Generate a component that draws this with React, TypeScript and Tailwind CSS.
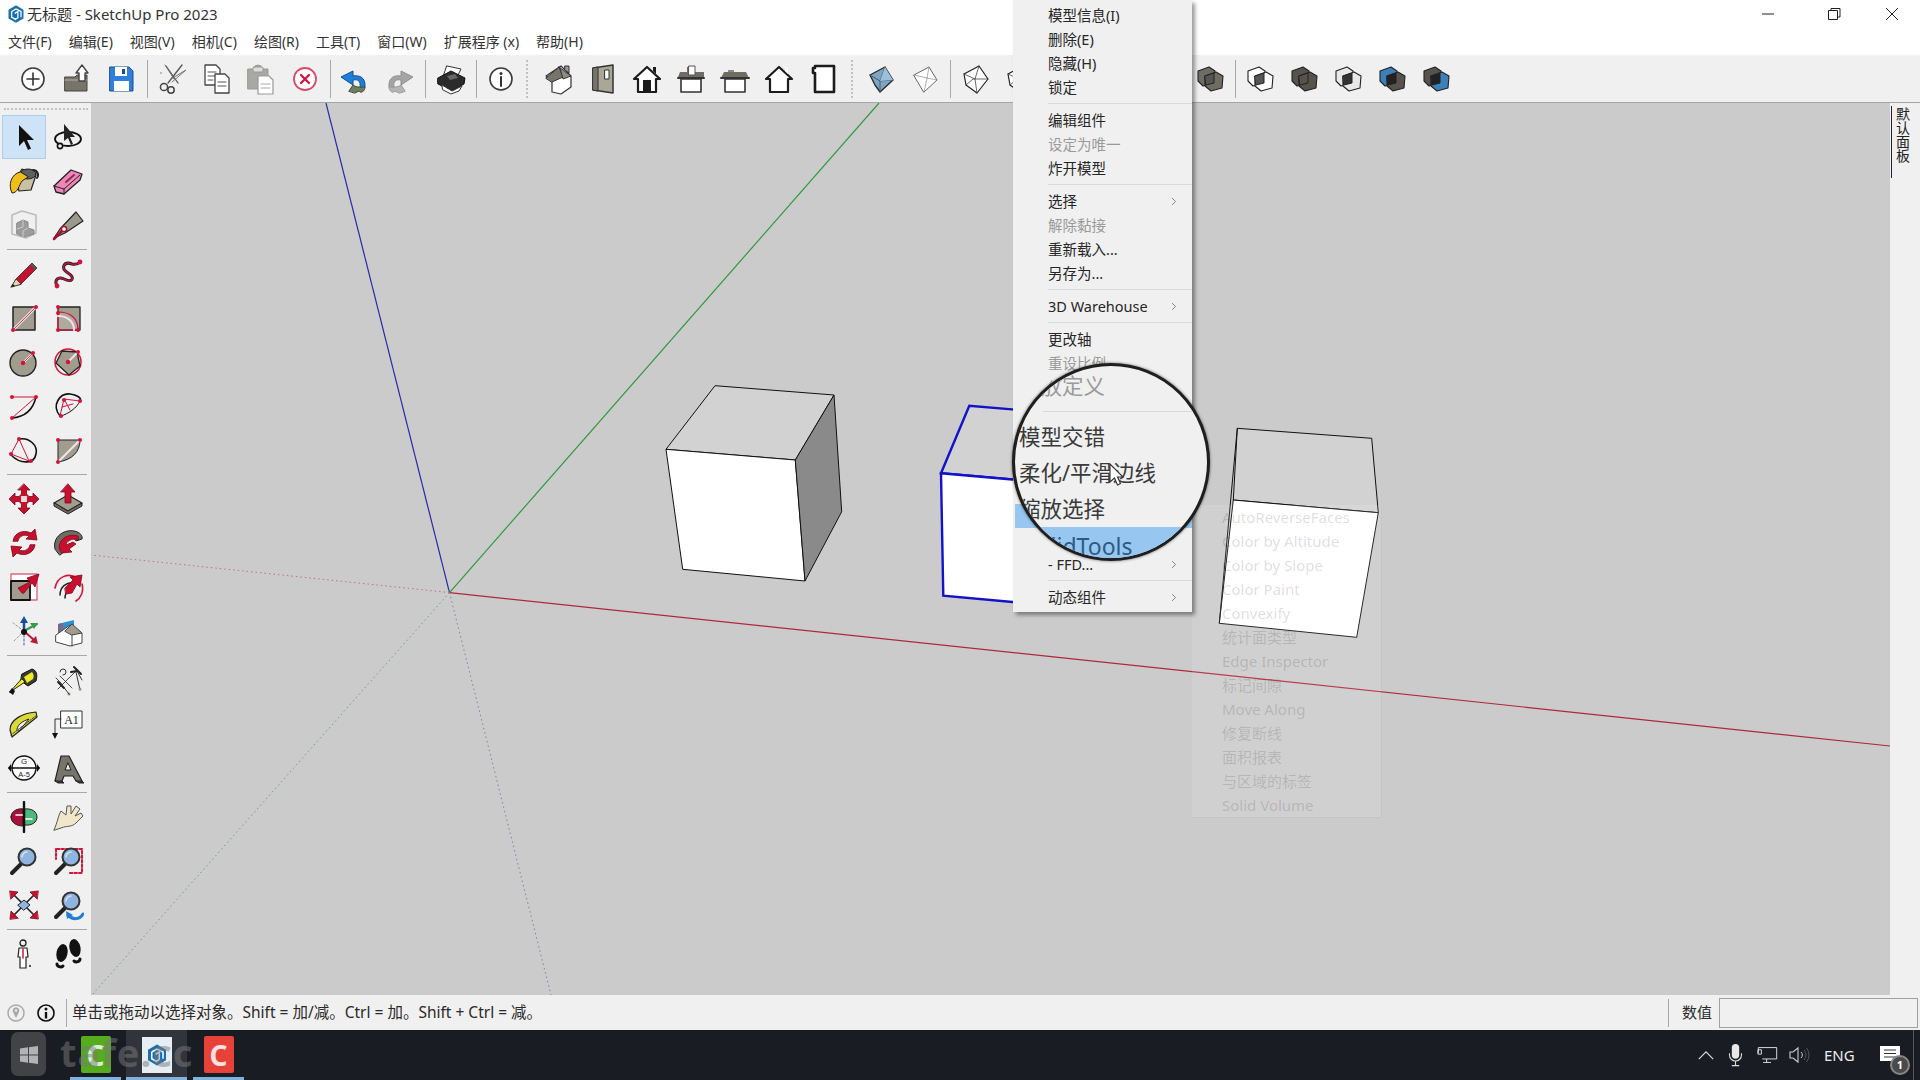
import React from "react";

const G = "#a09d8e";
const R = "#d4123a";
const K = "#1c1c1c";

const I = ({ children }: { children: React.ReactNode }) => (
  <svg viewBox="0 0 32 32" className="w-8 h-8" fill="none" strokeLinejoin="round" strokeLinecap="round">
    {children}
  </svg>
);

const Dot = ({ x, y, r = 2 }: { x: number; y: number; r?: number }) => <circle cx={x} cy={y} r={r} fill={R} />;

const House = ({ roof = "#6f6d63", body = "#fff", door = false }: { roof?: string; body?: string; door?: boolean }) => (
  <>
    <path d="M3 16 L16 4 L29 16 L25 16 L25 29 L7 29 L7 16 Z" fill={body} stroke={K} strokeWidth="2.2" />
    {door && <rect x="12" y="17" width="8" height="12" fill={K} />}
    <path d="M22 4 h3 v7 l-3 -3 z" fill={roof === "none" ? "#fff" : K} />
  </>
);

const wire = (
  <>
    <path d="M5 11 L20 3 L29 16 L18 30 L7 22 Z" fill="#fff" stroke="#222" strokeWidth="1.2" />
    <path d="M5 11 L16 16 L20 3 M16 16 L18 30 M7 22 L14 16 L29 16" stroke="#444" strokeWidth="0.8" />
  </>
);

const Solid = ({ a, b, c }: { a: string; b: string; c: string }) => (
  <>
    <path d="M4 8 L15 4 L21 8 L20 20 L9 23 L4 18 Z" fill={a} stroke="#222" strokeWidth="1.1" />
    <path d="M11 13 L22 9 L29 13 L28 25 L17 28 L11 23 Z" fill={b} stroke="#222" strokeWidth="1.1" />
    <path d="M11 13 L20 10 L20 20 L12 22 Z" fill={c} stroke="#222" strokeWidth="1" />
  </>
);

const top1 = [
  <I key="n"><circle cx="16" cy="16" r="11" stroke="#3b3b3b" strokeWidth="1.6" fill="#fff" /><path d="M16 10v12M10 16h12" stroke="#333" strokeWidth="1.6" /></I>,
  <I key="o"><path d="M4 14 h10 l2 -2 h10 v16 H4 Z" fill="#77756a" stroke="#444" /><path d="M4 17 h22" stroke="#b5b3a8" /><path d="M21 2 l6 8 h-3 v8 h-6 v-8 h-3 Z" fill="#fff" stroke="#444" strokeWidth="1.4" /></I>,
  <I key="s"><path d="M5 4 h19 l4 4 v20 H5 Z" fill="#2f7fdc" stroke="#1a4e8f" /><rect x="10" y="4" width="12" height="9" fill="#fff" /><rect x="17" y="6" width="3" height="5" fill="#1a4e8f" /><rect x="9" y="18" width="15" height="10" fill="#fff" /></I>,
];
const top2 = [
  <I key="c"><path d="M11 20 L25 2 M21 20 L9 3 M4 10 h0" stroke="#555" strokeWidth="1.3" /><path d="M14 16 L29 7 L15 19 M17 16 L8 2" stroke="#777" strokeWidth="1" /><circle cx="7" cy="24" r="3.6" stroke="#444" strokeWidth="1.5" /><circle cx="14" cy="27" r="3.2" stroke="#444" strokeWidth="1.5" /></I>,
  <I key="cp"><path d="M4 2 h11 l4 4 v16 H4 Z" fill="#fff" stroke="#444" strokeWidth="1.3" /><path d="M7 9h8M7 13h8M7 17h5" stroke="#555" /><path d="M14 11 h10 l4 4 v15 H14 Z" fill="#fff" stroke="#444" strokeWidth="1.3" /><path d="M17 19h8M17 23h8" stroke="#555" /></I>,
  <I key="p"><path d="M3 6 h6 a4 4 0 0 1 8 0 h6 v20 H3 Z" fill="#a9a9a3" stroke="#999" /><rect x="8" y="4" width="10" height="5" rx="1" fill="#dcdcd8" stroke="#999" /><path d="M13 13 h11 l4 4 v14 H13 Z" fill="#fff" stroke="#999" strokeWidth="1.2" /><path d="M16 21h9M16 25h9" stroke="#aaa" /></I>,
  <I key="d"><circle cx="16" cy="16" r="11" stroke="#d84a6c" strokeWidth="1.8" fill="#fff" /><path d="M12 12l8 8M20 12l-8 8" stroke={R} strokeWidth="2.2" /></I>,
];
const top3 = [
  <I key="u"><path d="M26 24 C27 14 20 12 14 13 V8 L2 14 L14 22 V17 C19 16 22 18 21 24 Z" fill="#1f7fd6" stroke="#0f4f8f" /><path d="M10 28 L14 22 C18 25 23 24 26 24 C26 28 22 31 20 28 L16 30 Z" fill="#6f7e5e" stroke="#3f4a35" /></I>,
  <I key="r"><path d="M6 24 C5 14 12 12 18 13 V8 L30 14 L18 22 V17 C13 16 10 18 11 24 Z" fill="#a5a5a5" stroke="#909090" /><path d="M22 28 L18 22 C14 25 9 24 6 24 C6 28 10 31 12 28 L16 30 Z" fill="#b5b5b5" stroke="#999" /></I>,
];
const print = <I key="pr"><path d="M12 3 L26 6 L22 14 L9 12 Z" fill="#fff" stroke="#333" /><path d="M3 15 L16 8 L30 15 L29 21 L17 28 L3 21 Z" fill="#2b2b2b" stroke="#111" /><path d="M12 13 L20 11 L23 15 L15 17 Z" fill="#666" /><path d="M7 22 L17 28 L27 23 L24 28 L16 31 L8 27 Z" fill="#fff" stroke="#333" /></I>;
const info = <I key="i"><circle cx="16" cy="16" r="11" stroke="#3b3b3b" strokeWidth="1.6" fill="#fff" /><circle cx="16" cy="10.5" r="1.5" fill="#333" /><path d="M16 14v9" stroke="#333" strokeWidth="2" /></I>;
const houses = [
  <I key="h1"><path d="M9 17 L9 29 L18 31 L28 24 L28 13 L18 3 L3 13 Z" fill="#fff" stroke="#333" strokeWidth="1.2" /><path d="M3 15 L16 4 L20 14 L9 19 Z" fill="#77756a" stroke="#333" /><path d="M16 4 L28 13 L20 16 L17 5Z" fill="#8f8d82" stroke="#333" /><path d="M22 3h4v7l-4-3z" fill="#999" stroke="#333" /></I>,
  <I key="h2"><path d="M6 5 L26 2 L26 30 L6 27 Z" fill="#a9a797" stroke="#333" strokeWidth="1.5" /><path d="M6 5 L11 4 L11 28 L6 27 Z" fill="#77756a" stroke="#333" /><rect x="18" y="7" width="4" height="9" fill="#fff" stroke="#333" /></I>,
  <I key="h3"><House door /></I>,
  <I key="h4"><path d="M3 14 H29 V9 H20 V4 H12 V9 H5 Z" fill="#6f6d63" /><rect x="14" y="3" width="6" height="9" fill="#fff" stroke="#555" /><path d="M3 15 h26" stroke="#333" strokeWidth="2" /><rect x="6" y="16" width="20" height="13" fill="#fff" stroke="#333" strokeWidth="1.6" /></I>,
  <I key="h5"><path d="M7 9 L27 9 L30 15 H2 L5 9 Z" fill="#6f6d63" /><path d="M9 7 h6 v2 h-6Z" fill="#888" /><path d="M2 15 h28" stroke="#333" strokeWidth="2" /><rect x="6" y="16" width="20" height="13" fill="#fff" stroke="#333" strokeWidth="1.6" /></I>,
  <I key="h6"><House roof="none" /></I>,
  <I key="h7"><path d="M8 3 H27 V29 H8 V10 H6 V5 H8 Z" fill="#fff" stroke={K} strokeWidth="2.6" /></I>,
];
const views = [
  <I key="v1"><path d="M5 12 L20 4 L28 17 L15 29 L10 22 Z" fill="#7ea6c2" stroke="#2b2b2b" strokeWidth="1.4" /><path d="M5 12 L15 18 L20 4 M15 18 L15 29 M15 18 L28 17" stroke="#3f5f78" /><path d="M15 18 L20 4 L28 17Z" fill="#9cc0da" /></I>,
  <I key="v2"><path d="M5 12 L20 4 L28 17 L15 29 Z" fill="#fff" stroke="#666" strokeWidth="1" /><path d="M5 12 L18 15 L20 4 M18 15 L15 29 M18 15 L28 17" stroke="#999" strokeWidth=".8" /></I>,
];
const view3 = [<I key="w1">{wire}</I>, <I key="w2">{wire}</I>];
const solid0 = <I key="s0"><Solid a="#6f6d63" b="#6f6d63" c="#555" /></I>;
const solids = [
  <I key="s1"><Solid a="#fff" b="#fff" c="#555" /></I>,
  <I key="s2"><Solid a="#55534b" b="#55534b" c="#55534b" /></I>,
  <I key="s3"><Solid a="#e8e8e8" b="#e8e8e8" c="#333" /></I>,
  <I key="s4"><Solid a="#3d7fb8" b="#55534b" c="#222" /></I>,
  <I key="s5"><Solid a="#55534b" b="#3d7fb8" c="#222" /></I>,
];

const Arrow = ({ d, f = "#c8102e" }: { d: string; f?: string }) => <path d={d} fill={f} stroke="#7a0a1e" strokeWidth=".8" />;
const Mag = ({ x = 0 }: { x?: number }) => (
  <>
    <path d={`M${4 + x} 28 L${13 + x} 19`} stroke="#222" strokeWidth="4" />
    <circle cx={19 + x} cy="12" r="8.5" fill="#8fb4de" stroke="#333" strokeWidth="2" />
    <path d={`M${14 + x} 12 a5 5 0 0 1 5 -5`} stroke="#d5e5f6" strokeWidth="1.5" />
  </>
);

const left1 = [
  <I key="a"><path d="M11 4 V25 L16 20 L20 29 L23 27.5 L19 19 L26 19 Z" fill="#111" /></I>,
  <I key="b"><ellipse cx="16" cy="18" rx="13" ry="7" stroke="#111" strokeWidth="1.8" /><path d="M12 3 V20 L16 17 L19 24 L21 23 L18 16 L23 16 Z" fill="#222" /><circle cx="8" cy="25" r="2.6" stroke="#111" strokeWidth="1.6" fill="#f0f0f0" /></I>,
  <I key="c"><path d="M14 4 L28 10 L23 25 L11 26 L8 14 Z" fill="#c9c1a3" stroke="#222" strokeWidth="1.2" /><ellipse cx="20" cy="9" rx="8" ry="5" fill="#5a6260" stroke="#222" /><path d="M25 5 a5 5 0 0 1 4 8" stroke="#222" strokeWidth="2" /><path d="M12 7 C3 9 0 20 4 28 C10 28 11 20 14 16 L20 12 Z" fill="#f0be1a" stroke="#222" /></I>,
  <I key="d"><path d="M2 21 L19 5 L30 9 L28 15 L12 29 L4 27 Z" fill="#ef86b8" stroke="#222" strokeWidth="1.3" /><path d="M2 21 L12 24 L12 29 M12 24 L28 10" stroke="#222" strokeWidth="1" /><path d="M14 17 L22 10" stroke="#8a2b5e" strokeWidth="2" /></I>,
  <I key="e"><path d="M4 6 L14 2 L28 6 L28 24 L18 29 L4 25 Z" stroke="#bdbdbd" strokeWidth="1.6" /><path d="M9 14 L15 11 L20 13 L20 19 L26 21 L26 25 L16 28 L9 25 Z" fill="#9c9c9c" stroke="#888" /><path d="M15 11 V18 L9 20 M20 19 L15 22 V28" stroke="#ccc" /></I>,
  <I key="f"><path d="M2 29 L8 20 L24 3 L31 12 L13 24 Z" fill="#9c9a8b" stroke="#222" strokeWidth="1.2" /><path d="M2 30 L11 21" stroke="#a8102e" strokeWidth="2.5" /><circle cx="12" cy="20" r="2.6" fill="#fff" stroke="#a8102e" strokeWidth="1.5" /></I>,
];
const left2 = [
  <I key="g"><path d="M4 28 L8 21 L24 5 L29 10 L13 26 Z" fill="#c4122f" stroke="#222" strokeWidth=".8" /><path d="M22 7 L27 12 L29 10 L24 5Z" fill="#555" /><path d="M3 29 L8 21 L13 26 Z" fill="#e5d3a5" stroke="#222" strokeWidth=".7" /><path d="M3 29 L5 26 L7 28Z" fill="#111" /></I>,
  <I key="h"><path d="M5 28 C2 22 6 18 12 21 C20 25 24 20 16 15 C8 10 12 3 20 6 C24 7 26 6 28 4" stroke={K} strokeWidth="3" /><path d="M5 28 C2 22 6 18 12 21 C20 25 24 20 16 15 C8 10 12 3 20 6 C24 7 26 6 28 4" stroke="#b3163c" strokeWidth="1.6" /><Dot x={5} y={28} r={2.4} /><Dot x={28} y={4} r={2.4} /></I>,
  <I key="i"><rect x="5" y="5" width="22" height="23" fill={G} stroke="#222" strokeWidth="1.5" /><path d="M5 28 L28 5" stroke="#f7dfe4" strokeWidth="2.5" /><path d="M5 28 L28 5" stroke={R} strokeWidth=".8" /><Dot x={5} y={28} /><Dot x={28} y={5} /></I>,
  <I key="j"><rect x="6" y="5" width="22" height="23" fill={G} stroke="#222" strokeWidth="1.3" /><path d="M6 10 C18 10 26 16 26 28 H6 Z" fill="#fff" fillOpacity=".15" stroke={R} strokeWidth="1.2" /><path d="M6 14 C15 14 22 19 22 28" stroke="#f7dfe4" strokeWidth="2" /><Dot x={6} y={5} /><Dot x={6} y={11} /><Dot x={6} y={28} /><Dot x={26} y={28} /></I>,
  <I key="k"><circle cx="15" cy="17" r="13" fill={G} stroke="#222" strokeWidth="1.4" /><path d="M15 17 L25 7" stroke="#f7dfe4" strokeWidth="2.2" /><path d="M15 17 L25 7" stroke={R} strokeWidth=".8" /><Dot x={15} y={17} r={2.2} /><Dot x={25} y={7} /></I>,
  <I key="l"><circle cx="16" cy="16" r="13" stroke={R} strokeWidth="1.5" /><path d="M4 17 L10 5 L25 6 L28 20 L17 29 Z" fill={G} stroke="#222" strokeWidth="1.3" /><path d="M16 16 L26 6" stroke="#f7dfe4" strokeWidth="2.2" /><Dot x={16} y={16} r={2.2} /><Dot x={26} y={6} /></I>,
  <I key="m"><path d="M4 28 C16 27 25 20 28 7" stroke="#111" strokeWidth="1.5" /><path d="M4 28 L28 7 M4 7 H28" stroke={R} strokeWidth="1" /><Dot x={4} y={28} /><Dot x={28} y={7} /><Dot x={4} y={7} /></I>,
  <I key="n"><path d="M8 26 C-1 15 8 3 18 4 C25 5 30 8 28 11" stroke="#111" strokeWidth="1.6" /><path d="M9 26 C16 24 25 18 28 11" stroke="#111" strokeWidth="1" /><path d="M8 26 L12 9 M18 20 L12 9 L28 11 M10 17 L21 14" stroke={R} strokeWidth="1" /><Dot x={12} y={10} /><Dot x={28} y={11} /><Dot x={9} y={26} /></I>,
  <I key="o"><path d="M11 5 C22 3 30 12 28 20 C27 26 23 28 18 28" stroke="#111" strokeWidth="1.6" /><path d="M3 21 C8 26 13 28 18 28" stroke="#111" strokeWidth="1.4" /><path d="M11 5 L21 27 L3 20 M11 5 L3 20" stroke={R} strokeWidth="1" /><Dot x={11} y={5} /><Dot x={3} y={20} /><Dot x={23} y={27} /></I>,
  <I key="p"><path d="M6 28 V6 H28 C28 18 20 26 6 28 Z" fill={G} stroke="#222" strokeWidth="1" /><path d="M6 28 L28 6" stroke="#f7dfe4" strokeWidth="2.2" /><Dot x={6} y={6} /><Dot x={28} y={6} /><Dot x={6} y={28} /></I>,
];
const left3 = [
  <I key="q"><Arrow d="M16 1 L22 7 H18.5 V11 L21 13.5 H25 V10 L31 16 L25 22 V18.5 H21 L18.5 21 V25 H22 L16 31 L10 25 H13.5 V21 L11 18.5 H7 V22 L1 16 L7 10 V13.5 H11 L13.5 11 V7 H10 Z" /><path d="M13 13 h6 v6 h-6z" fill="#f5d7dc" /></I>,
  <I key="r"><path d="M2 20 L16 12 L30 20 L16 28 Z" fill={G} stroke="#222" strokeWidth="1.2" /><path d="M2 20 V23 L16 31 L30 23 V20 L16 28 Z" fill="#6f6d63" stroke="#222" /><Arrow d="M16 1 L23 9 H19 V20 H13 V9 H9 Z" /></I>,
  <I key="s"><Arrow d="M5 14 C6 6 15 2 23 6 L27 2 L29 13 L18 12 L21 9 C16 7 11 9 10 14 Z" /><Arrow d="M27 18 C26 26 17 30 9 26 L5 30 L3 19 L14 20 L11 23 C16 25 21 23 22 18 Z" /></I>,
  <I key="t"><path d="M3 22 C0 10 12 2 22 4 C28 5 31 9 30 12 L24 14 C22 9 16 10 13 14 C11 17 12 21 13 24 L8 28 Z" fill="#6f6d63" stroke="#222" strokeWidth="1" /><Arrow d="M7 21 C7 12 16 6 26 9 L27 13 C20 10 14 15 14 18 L21 15 L24 17 L17 22 L20 25 L10 26 Z" /></I>,
  <I key="u"><path d="M3 3 H29 V29 H3 Z" fill="#fff" stroke="#d96a80" strokeWidth="1.4" /><rect x="3" y="10" width="19" height="19" fill={G} stroke="#111" strokeWidth="1.8" /><Arrow d="M14 22 L10 17 L22 11 L19 7 L31 3 L27 16 L24 12 L16 22Z" /></I>,
  <I key="v"><path d="M3 17 C5 6 16 1 25 7 M30 13 C32 20 29 27 24 30" stroke={R} strokeWidth="1.6" /><path d="M8 24 C8 16 14 11 22 12 M13 27 C13 22 16 19 19 19" stroke="#222" strokeWidth="1.5" /><Arrow d="M13 17 L21 9 L18 6 L30 4 L28 16 L25 13 L20 22 L14 23Z" /></I>,
  <I key="w"><path d="M16 16 L5 8 M16 16 L6 26" stroke="#9a9a9a" strokeDasharray="2 2" /><path d="M16 16 V30" stroke="#2a5fb0" strokeDasharray="2 2" /><path d="M16 16 L29 9" stroke="#3a9a48" strokeWidth="2" /><path d="M30 8 L22 8 L26 14Z" fill="#3a9a48" /><path d="M16 16 L27 26" stroke="#b81a3a" strokeWidth="2" /><path d="M30 29 L22 27 L28 21Z" fill="#b81a3a" /><path d="M16 16 V6" stroke="#1a4fa0" strokeWidth="2.5" /><path d="M16 1 L12 8 H20Z" fill="#1a4fa0" /><circle cx="16" cy="17" r="3" fill="#111" /></I>,
  <I key="x"><path d="M6 9 L22 5 L22 27 L6 25 Z" fill="#2f8fd0" /><path d="M6 9 L11 8 L11 26 L6 25Z" fill="#7a6a80" /><path d="M4 20 L18 10 L30 18 V28 L18 31 L4 27 Z" fill="#fff" stroke="#444" /><path d="M13 16 L20 9 L30 18 L20 20 Z" fill={G} stroke="#444" /><path d="M20 20 V31" stroke="#444" /></I>,
];
const left4 = [
  <I key="y"><path d="M14 10 L24 5 C28 6 30 10 28 17 L20 22 L13 17 Z" fill="#3a3a32" stroke="#111" /><path d="M16 13 L24 8 C26 10 26 13 25 15 L19 19 Z" fill="#ecec28" /><path d="M2 28 L17 18 L14 15 Z" fill="#ecec28" stroke="#222" strokeWidth="1" /><path d="M1 28 L5 31 L7 27 L4 24 Z" fill="#111" /></I>,
  <I key="z"><path d="M6 25 L25 6 M4 14 L10 20 M20 24 L8 12" stroke="#222" strokeWidth=".8" /><path d="M22 3 L29 10 M19 8 L25 7 M6 18 L12 24" stroke="#222" strokeWidth="2" /><path d="M24 8 L28 26" stroke="#333" strokeWidth="1" /><circle cx="28" cy="25" r="1.5" fill="#80a080" /><circle cx="17" cy="30" r="1.5" fill="#80a080" /><path d="M10 21 L17 30 M25 7 L30 16" stroke="#333" /><path d="M8 8 a3 3 0 1 1 3 3" stroke="#333" /></I>,
  <I key="aa"><path d="M2 22 C2 12 14 5 28 4 L29 9 L4 29 Z" fill="#d9d93a" stroke="#222" strokeWidth="1.2" /><path d="M9 21 C10 16 15 13 21 11 L11 23 Z" fill="#f0f0f0" stroke="#222" /><path d="M3 27 L29 7" stroke="#333" strokeDasharray="1.5 1.5" /></I>,
  <I key="ab"><rect x="9" y="3" width="21" height="17" fill="#fff" stroke="#333" strokeWidth="1" /><text x="19.5" y="16" textAnchor="middle" fontSize="12" fontFamily="'Liberation Serif',serif" fill="#222">A1</text><path d="M9 11 H3 V27" stroke="#333" strokeWidth="1" /><path d="M0 25 H6 L3 31 Z" fill="#111" /></I>,
  <I key="ac"><circle cx="16" cy="16" r="12" fill="#fff" stroke="#111" strokeWidth="1.4" /><path d="M1 16 H31" stroke="#111" strokeWidth="1.6" /><path d="M3 12 L0 16 L3 20Z M29 12 L32 16 L29 20Z" fill="#111" /><text x="16" y="12" textAnchor="middle" fontSize="8" fontFamily="'Liberation Sans',sans-serif" fill="#222">G</text><text x="16" y="25" textAnchor="middle" fontSize="7.5" fontFamily="'Liberation Sans',sans-serif" fill="#222">A-5</text></I>,
  <I key="ad"><path d="M9 4 H17 L30 29 H24 L21 24 H12 L10 29 H3 Z" fill="#77756a" stroke="#222" strokeWidth="1.2" /><path d="M13.5 18 H19 L16 11 Z" fill="#f0f0f0" stroke="#222" /><path d="M3 29 L6 31 H12 L10 29 M24 29 L27 31 H32 L30 29" fill="#333" stroke="#222" /></I>,
];
const left5 = [
  <I key="ae"><path d="M3 16 C3 10 10 7 15 8 V25 C9 25 3 22 3 16 Z" fill="#a8123a" stroke="#222" /><path d="M17 8 C24 7 29 11 29 16 C29 21 24 25 17 24 Z" fill="#4fb87a" stroke="#222" /><path d="M8 14 h7 M17 18 h7" stroke="#fff" strokeWidth="1.5" /><path d="M16 1 V31" stroke="#111" strokeWidth="2.4" /></I>,
  <I key="af"><path d="M2 29 C6 20 6 15 9 10 L14 14 L15 5 L19 5 L19 13 L24 5 L28 8 L23 15 L29 12 L31 15 L24 22 C20 26 15 25 12 26 Z" fill="#f2e6c8" stroke="#555" strokeWidth="1" /></I>,
  <I key="ag"><Mag /></I>,
  <I key="ah"><path d="M5 4 H30 V28 H18" stroke={R} strokeWidth="2" strokeDasharray="2.5 2" /><path d="M4 4 V14" stroke={R} strokeWidth="2" strokeDasharray="2.5 2" /><Mag /></I>,
  <I key="ai"><path d="M16 16 L4 4 M16 16 L28 4 M16 16 L4 28 M16 16 L28 28" stroke="#222" strokeWidth="1.6" /><Arrow d="M2 2 L10 3 L3 10 Z" /><Arrow d="M30 2 L22 3 L29 10Z" /><Arrow d="M2 30 L3 22 L10 29Z" /><Arrow d="M30 30 L22 29 L29 22Z" /><path d="M10 16 L16 11 L22 16 L16 21Z" fill="#8fb4de" stroke="#222" /></I>,
  <I key="aj"><Mag x={0} /><path d="M16 26 C20 31 28 31 31 25" stroke="#1f7fd6" strokeWidth="3" /><path d="M14 22 L15 30 L21 26Z" fill="#1f7fd6" /></I>,
];
const left6 = [
  <I key="ak"><circle cx="15" cy="5" r="3" stroke="#222" strokeWidth="1.3" /><path d="M11 10 H19 L20 19 H18 L18 30 H12 L12 19 H10 Z" fill="#fff" stroke="#222" strokeWidth="1.2" /><path d="M15 11 L15 20" stroke={R} strokeWidth="1.5" /><circle cx="22" cy="28" r="1" fill="#222" /></I>,
  <I key="al"><ellipse cx="10" cy="15" rx="5.5" ry="9" fill="#111" transform="rotate(12 10 15)" /><path d="M5 26 a3.5 3 0 0 0 6 2" stroke="#111" strokeWidth="3" /><ellipse cx="23" cy="10" rx="5.5" ry="9" fill="#111" transform="rotate(-12 23 10)" /><path d="M22 23 a3.5 3 0 0 0 6 -2" stroke="#111" strokeWidth="3" /></I>,
];

const Cell = ({ children, active }: { children: React.ReactNode; active?: boolean }) => (
  <div className={`w-11 h-11 flex items-center justify-center shrink-0 ${active ? "bg-[#cfe3f7] border border-[#aacdf0]" : ""}`}>{children}</div>
);
const VSep = ({ cls = "" }: { cls?: string }) => <div className={`w-px h-[38px] bg-[#a8a8a8] mx-[2px] shrink-0 ${cls}`} />;
const Grip = () => <div className="w-[2px] h-[38px] mx-[3px] shrink-0 border-l-2 border-dotted border-[#c0c0c0]" />;
const HSep = () => <div className="h-px bg-[#a8a8a8] mx-[5px] my-[2px] col-span-2 w-[80px]" />;

const menuItems: (string | [string, ("d" | "a")?])[] = [
  ["模型信息(I)"], ["删除(E)"], ["隐藏(H)"], ["锁定"], "-",
  ["编辑组件"], ["设定为唯一", "d"], ["炸开模型"], "-",
  ["选择", "a"], ["解除黏接", "d"], ["重新载入..."], ["另存为..."], "-",
  ["3D Warehouse", "a"], "-",
  ["更改轴"], ["重设比例", "d"], ["缩放定义", "d"], "-",
];

const Chevron = () => (
  <svg viewBox="0 0 8 12" className="w-[6px] h-[9px] absolute right-[15px] top-[8px]" fill="none">
    <path d="M1.5 1.5 L6 6 L1.5 10.5" stroke="#777" strokeWidth="1.2" />
  </svg>
);

const Row = ({ t, kind, hi }: { t: string; kind?: string; hi?: boolean }) => (
  <div className={`relative h-6 pl-[35px] leading-6 whitespace-nowrap ${kind === "d" ? "text-[#9a9a9a]" : "text-[#262626]"} ${hi ? "bg-[#97c6f0] ml-[2px] -mr-0 pl-[33px]" : ""}`}>
    {t}
    {kind === "a" && <Chevron />}
  </div>
);

const Sep = () => (
  <div className="h-[9px] flex items-center pl-[35px]">
    <div className="h-px w-full bg-[#dadada]" />
  </div>
);

const subItems = ["AutoReverseFaces", "Color by Altitude", "Color by Slope", "Color Paint", "Convexify", "统计面类型", "Edge Inspector", "标记间隙", "Move Along", "修复断线", "面积报表", "与区域的标签", "Solid Volume"];

const Logo = ({ cls }: { cls: string }) => (
  <svg viewBox="0 0 32 32" className={cls} fill="none">
    <path d="M16 2 L28 9 V23 L16 30 L4 23 V9 Z" fill="#1b6fae" />
    <path d="M9 12 L16 8 L24 12 V21 M9 12 V21 L16 25 M14 15 L19 12 V22 L14 25" stroke="#fff" strokeWidth="2" />
  </svg>
);

export default function App() {
  return (
    <div className="relative w-[1920px] h-[1080px] overflow-hidden bg-white text-[15px] [font-family:'Noto_Sans','Noto_Sans_CJK_SC',sans-serif]">
      {/* title */}
      <div className="h-7 bg-white flex items-center pl-[6px] text-[#333]">
        <Logo cls="w-[20px] h-[20px]" />
        <span className="ml-[1px] text-[15px]">无标题 - SketchUp Pro 2023</span>
        <div className="ml-auto flex items-center">
          <svg viewBox="0 0 16 16" className="w-4 h-4 mr-[50px]" fill="none"><path d="M2 8 H14" stroke="#222" strokeWidth="1" /></svg>
          <svg viewBox="0 0 16 16" className="w-4 h-4 mr-[42px]" fill="none"><path d="M2.5 4.5 h9 v9 h-9 z M5 4.5 V2.5 H14 V11 H11.5" stroke="#222" strokeWidth="1" /></svg>
          <svg viewBox="0 0 16 16" className="w-4 h-4 mr-[20px]" fill="none"><path d="M2 2 L14 14 M14 2 L2 14" stroke="#222" strokeWidth="1" /></svg>
        </div>
      </div>
      {/* menu */}
      <div className="h-[27px] bg-white flex items-center pl-[8px] gap-[17px] text-[14px] text-[#333]">
        {["文件(F)", "编辑(E)", "视图(V)", "相机(C)", "绘图(R)", "工具(T)", "窗口(W)", "扩展程序 (x)", "帮助(H)"].map((m) => (
          <span key={m}>{m}</span>
        ))}
      </div>
      {/* top toolbar */}
      <div className="h-[48px] bg-[#f0f0f0] border-b border-[#a6a6a6] flex items-center pl-[11px]">
        {top1.map((c, i) => <Cell key={i}>{c}</Cell>)}
        <div className="w-[8px] flex justify-center"><div className="w-px h-[38px] bg-[#a8a8a8]" /></div>
        {top2.map((c, i) => <Cell key={i}>{c}</Cell>)}
        <div className="w-[6px] flex justify-center"><div className="w-px h-[38px] bg-[#a8a8a8]" /></div>
        {top3.map((c, i) => <Cell key={i}>{c}</Cell>)}
        <div className="w-[8px] flex justify-center"><div className="w-px h-[38px] bg-[#a8a8a8]" /></div>
        <Cell>{print}</Cell>
        <div className="w-[6px] flex justify-center"><div className="w-px h-[38px] bg-[#a8a8a8]" /></div>
        <Cell>{info}</Cell>
        <Grip />
        <div className="w-[6px]" />
        {houses.map((c, i) => <Cell key={i}>{c}</Cell>)}
        <div className="w-[14px] flex justify-center"><div className="w-[2px] h-[38px] border-l-2 border-dotted border-[#c0c0c0]" /></div>
        {views.map((c, i) => <Cell key={i}>{c}</Cell>)}
        <div className="w-[6px] flex justify-center"><div className="w-px h-[38px] bg-[#a8a8a8]" /></div>
        {view3.map((c, i) => <Cell key={i}>{c}</Cell>)}
        <div className="w-[147px]" />
        <Cell>{solid0}</Cell>
        <div className="w-[6px] flex justify-center"><div className="w-px h-[38px] bg-[#a8a8a8]" /></div>
        {solids.map((c, i) => <Cell key={i}>{c}</Cell>)}
      </div>
      {/* main */}
      <div className="h-[892px] flex">
        <div className="w-[91px] bg-[#f0f0f0] pl-[2px] shrink-0 overflow-hidden">
          <div className="h-[12px] flex items-center"><div className="w-[84px] ml-[2px] border-t-2 border-dotted border-[#c4c4c4]" /></div>
          <div className="grid grid-cols-[44px_44px]">
            {left1.map((c, i) => <Cell key={i} active={i === 0}>{c}</Cell>)}
            <HSep />
            {left2.map((c, i) => <Cell key={i}>{c}</Cell>)}
            <HSep />
            {left3.map((c, i) => <Cell key={i}>{c}</Cell>)}
            <HSep />
            {left4.map((c, i) => <Cell key={i}>{c}</Cell>)}
            <HSep />
            {left5.map((c, i) => <Cell key={i}>{c}</Cell>)}
            <HSep />
            {left6.map((c, i) => <Cell key={i}>{c}</Cell>)}
          </div>
        </div>
        <div className="flex-1 bg-[#cbcbcb] relative">
          <svg viewBox="91 103 1799 892" className="w-full h-full block" fill="none">
            <path d="M449.5 592.6 L326 103" stroke="#2a2aa8" strokeWidth="1.2" />
            <path d="M449.5 592.6 L879 103" stroke="#2f9a3a" strokeWidth="1.2" />
            <path d="M449.5 592.6 L1890 746" stroke="#b0283f" strokeWidth="1.2" />
            <path d="M449.5 592.6 L91 555" stroke="#c0707f" strokeDasharray="1.5 3" />
            <path d="M449.5 592.6 L551 995" stroke="#8080a8" strokeDasharray="1.5 3" />
            <path d="M449.5 592.6 L92 995" stroke="#70a078" strokeDasharray="1.5 3" />
            {/* cube 1 */}
            <path d="M666 449.3 L715 385.7 L834 395 L795.3 460 Z" fill="#d2d2d2" stroke="#111" strokeWidth="1" />
            <path d="M666 449.3 L795.3 460 L805 581 L682.7 569.3 Z" fill="#fff" stroke="#111" strokeWidth="1" />
            <path d="M795.3 460 L834 395 L841.7 511.7 L805 581 Z" fill="#8a8a8a" stroke="#111" strokeWidth="1" />
            {/* cube 2 */}
            <path d="M941 473.3 L969.3 405.7 L1100 417 L1100 487 Z" fill="#d2d2d2" stroke="#1212c8" strokeWidth="2.4" />
            <path d="M941 473.3 L1100 487 L1100 610 L943.3 595.7 Z" fill="#fff" stroke="#1212c8" strokeWidth="2.4" />
            {/* cube 3 */}
            <path d="M1237.3 428.3 L1371.7 438.3 L1378.3 512.7 L1233.3 500 Z" fill="#d2d2d2" stroke="#111" strokeWidth="1" />
            <path d="M1233.3 500 L1378.3 512.7 L1356.7 637.3 L1219.3 623.3 Z" fill="#fff" stroke="#111" strokeWidth="1" />
            <path d="M1237.3 428.3 L1219.3 623.3" stroke="#111" strokeWidth="1" />
          </svg>
        </div>
        <div className="w-[30px] bg-[#f0f0f0] shrink-0 relative pt-[3px] pl-[1px]">
          <div className="border-l border-[#223] h-[72px] pl-[1px] pt-[1px]">
            <div className="[writing-mode:vertical-rl] text-[14px] leading-[19px] text-[#222]">默认面板</div>
          </div>
        </div>
      </div>
      {/* status */}
      <div className="h-[35px] bg-[#f0f0f0] flex items-center pl-[6px] text-[15.5px] text-[#2a2a2a]">
        <svg viewBox="0 0 20 20" className="w-5 h-5" fill="none"><circle cx="10" cy="10" r="8" stroke="#a8a8a8" strokeWidth="1.4" /><path d="M10 15 L7 9 a3.3 3.3 0 1 1 6 0 Z" fill="#a8a8a8" /><circle cx="10" cy="7.5" r="1.2" fill="#f0f0f0" /></svg>
        <svg viewBox="0 0 20 20" className="w-5 h-5 ml-[10px]" fill="none"><circle cx="10" cy="10" r="8" stroke="#111" strokeWidth="1.6" /><circle cx="10" cy="6" r="1.5" fill="#111" /><path d="M10 9 V15.5" stroke="#111" strokeWidth="2.4" /></svg>
        <div className="w-px h-[28px] bg-[#a8a8a8] ml-[10px]" />
        <span className="ml-[5px] whitespace-nowrap">单击或拖动以选择对象。Shift = 加/减。Ctrl = 加。Shift + Ctrl = 减。</span>
        <div className="ml-auto w-px h-[28px] bg-[#a8a8a8]" />
        <span className="ml-[13px] text-[15px]">数值</span>
        <div className="ml-[7px] mr-[2px] w-[199px] h-[30px] border border-[#a0a0a0] bg-[#f0f0f0]" />
      </div>
      {/* taskbar */}
      <div className="h-[50px] bg-[#191c23] flex items-stretch relative">
        <div className="w-[70px] flex items-center justify-center pl-[-2px]">
          <svg viewBox="0 0 20 20" className="w-5 h-5 -ml-[12px]" fill="#fff"><path d="M1 3.5 L9 2.3 V9.5 H1 Z M10 2.2 L19 1 V9.5 H10 Z M1 10.5 H9 V17.7 L1 16.5 Z M10 10.5 H19 V19 L10 17.8 Z" /></svg>
        </div>
        <div className="w-[51px] border-b-[3px] border-[#7fb2dc] flex items-center justify-center">
          <div className="w-[30px] h-[37px] rounded-[2px] bg-[#55ac1c] flex items-center justify-center text-white/80 text-[28px] font-bold leading-none mt-[2px]">C</div>
        </div>
        <div className="w-[61px] ml-[5px] bg-[#31343b] border-b-[3px] border-[#7fb2dc] flex items-center justify-center">
          <div className="w-[30px] h-[36px] bg-[#e6eef3] flex items-center justify-center mt-[2px]"><Logo cls="w-[24px] h-[24px]" /></div>
        </div>
        <div className="w-[51px] ml-[6px] border-b-[3px] border-[#7fb2dc] flex items-center justify-center">
          <div className="w-[30px] h-[37px] rounded-[2px] bg-[#e8413a] flex items-center justify-center text-white/85 text-[28px] font-bold leading-none mt-[2px]">C</div>
        </div>
        <div className="ml-auto flex items-center text-white pr-[6px]">
          <svg viewBox="0 0 20 12" className="w-[18px] h-[11px] mr-[13px]" fill="none"><path d="M2 10 L10 2 L18 10" stroke="#ddd" strokeWidth="1.3" /></svg>
          <svg viewBox="0 0 16 26" className="w-[15px] h-[24px] mr-[14px]" fill="none"><rect x="4" y="1" width="8" height="16" rx="4" fill="#e8e8e8" /><path d="M1.5 11 V13 a6.5 6.5 0 0 0 13 0 V11 M8 20 V24 M4 24.5 H12" stroke="#ddd" strokeWidth="1.2" /></svg>
          <svg viewBox="0 0 24 20" className="w-[21px] h-[18px] mr-[10px]" fill="none"><path d="M1.5 1.5 H22.5 V14.5 H6 M11 14.5 V18.5 M7 18.5 H16 M1.5 1.5 V8 M1 4 H5 V9 H1 Z" stroke="#ddd" strokeWidth="1.1" /></svg>
          <svg viewBox="0 0 22 20" className="w-[22px] h-[20px] mr-[14px]" fill="none"><path d="M2 7 H5 L10 3 V17 L5 13 H2 Z" stroke="#ccc" strokeWidth="1.1" /><path d="M13 7 a4 4 0 0 1 0 6" stroke="#ccc" /><path d="M16 5 a8 8 0 0 1 0 10 M18.5 3 a11 11 0 0 1 0 14" stroke="#555" /></svg>
          <span className="text-[15px] text-[#ececec] w-[42px]">ENG</span>
          <div className="relative ml-[14px] mr-[13px]">
            <svg viewBox="0 0 20 18" className="w-[20px] h-[18px]" fill="#fff"><path d="M0 0 H20 V15 H0 Z" /><path d="M4 4 H16 M4 7.5 H16 M4 11 H16" stroke="#333" /></svg>
            <div className="absolute left-[10px] top-[9px] w-[20px] h-[20px] rounded-full bg-[#4a4a4a] border-2 border-[#888] text-white text-[11px] font-bold flex items-center justify-center">1</div>
          </div>
          <div className="w-px h-full bg-[#555]" />
        </div>
      </div>

      {/* faded submenu overlay */}
      <div className="absolute left-[1192px] top-[505px] w-[190px] h-[313px] bg-white/10 text-black/15 border-r border-b border-black/5 pl-[30px]">
        {subItems.map((s) => (
          <div key={s} className="h-6 leading-6 whitespace-nowrap">{s}</div>
        ))}
      </div>

      {/* context menu */}
      <div className="absolute left-[1013px] top-0 w-[179px] h-[612px] bg-[#f0f0f0] shadow-[3px_3px_4px_rgba(0,0,0,0.4)] pt-[3px] text-[14.5px]">
        {menuItems.map((m, i) =>
          m === "-" ? <Sep key={i} /> : <Row key={i} t={(m as [string])[0]} kind={(m as [string, string])[1]} />
        )}
        <Row t="模型交错" />
        <Row t="柔化/平滑边线" />
        <Row t="缩放选择" />
        <div className="h-6" />
        <Row t="SolidTools" hi kind="a" />
        <div className="h-6" />
        <Row t="- FFD..." kind="a" />
        <Sep />
        <Row t="动态组件" kind="a" />
      </div>

      {/* magnifier */}
      <div className="absolute left-[1012px] top-[363px] w-[198px] h-[198px] rounded-full overflow-hidden bg-[#f0f0f0] border-[3px] border-[#1f1f1f] shadow-[0_0_3px_rgba(0,0,0,0.6)] text-[21.5px] text-[#3a3a3a]">
        <div className="pl-[4px] -mt-[1px]">
          <div className="h-[36px] leading-[36px] mt-[3px] text-[#9a9a9a] whitespace-nowrap">缩放定义</div>
          <div className="h-px bg-[#dadada] ml-[24px] mt-[7px] mb-[7px]" />
          <div className="h-[36px] leading-[36px] whitespace-nowrap">模型交错</div>
          <div className="h-[36px] leading-[36px] whitespace-nowrap">柔化/平滑边线</div>
          <div className="h-[36px] leading-[36px] whitespace-nowrap">缩放选择</div>
        </div>
        <div className="bg-[#97c6f0] h-[60px] pl-[9px] pt-[1px] leading-[36px] text-[#2b5c86] text-[23px] whitespace-nowrap">SolidTools</div>
        <svg viewBox="0 0 16 24" className="absolute left-[94px] top-[97px] w-[16px] h-[24px]">
          <path d="M1 1 V19 L5.5 15 L8.5 22 L11.5 20.5 L8.5 14 L14 14 Z" fill="#fff" stroke="#333" strokeWidth="1.1" />
        </svg>
      </div>

      {/* watermark */}
      <div className="absolute left-[11px] top-[1032px] flex items-center gap-[14px] opacity-50">
        <div className="w-[35px] h-[44px] rounded-[7px] bg-[#6a6a6a]" />
        <span className="text-[38px] font-bold text-[#7a7a7a] leading-none -mt-[4px] tracking-wide">tafe.cc</span>
      </div>
    </div>
  );
}
